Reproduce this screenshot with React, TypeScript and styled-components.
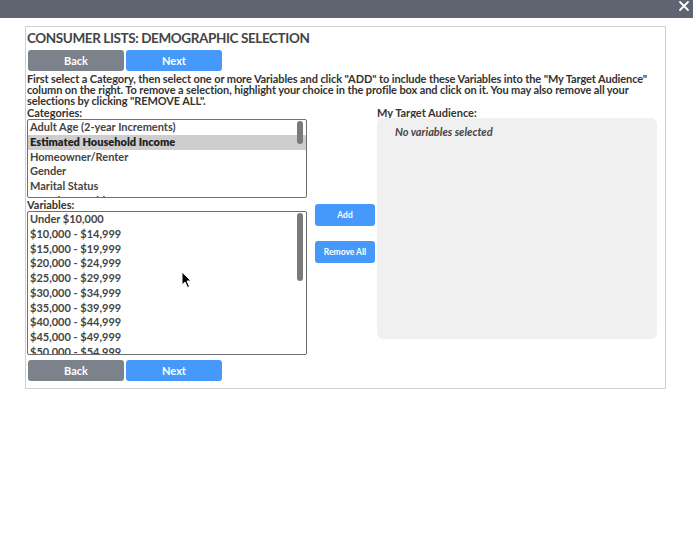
import React from 'react';
import styled, { createGlobalStyle } from 'styled-components';

const GlobalStyle = createGlobalStyle`
  html, body {
    margin: 0;
    padding: 0;
    background: #fff;
  }
  body {
    font-family: Lato, "Noto Sans", sans-serif;
    color: #333;
  }
`;

const Page = styled.div`
  width: 693px;
  height: 542px;
  position: relative;
  overflow: hidden;
  background: #fff;
`;

const TopBar = styled.div`
  height: 18px;
  background: #5e6470;
  display: flex;
  justify-content: flex-end;
  align-items: center;
  padding-right: 3px;
`;

const CloseIcon = styled.svg`
  width: 12px;
  height: 12px;
  margin-top: -7px;
`;

const Panel = styled.div`
  margin: 8px 0 0 25px;
  width: 637px;
  height: 361px;
  border: 1px solid #cfcfcf;
  padding: 0 1px;
  box-sizing: content-box;
`;

const Title = styled.h1`
  margin: 3px 0 0;
  font-size: 13.5px;
  line-height: 16px;
  letter-spacing: -0.4px;
  font-weight: 700;
  color: #444;
`;

const ButtonRow = styled.div<{ $top: number }>`
  display: flex;
  gap: 2px;
  margin: ${(p) => p.$top}px 0 0 1px;
`;

const NavButton = styled.button<{ $variant: 'back' | 'next' }>`
  width: 96px;
  height: 21px;
  border: none;
  border-radius: 3px;
  background: ${(p) => (p.$variant === 'back' ? '#7b828b' : '#4499fb')};
  color: #fff;
  font-family: inherit;
  font-size: 11px;
  font-weight: 700;
  padding: 0;
  cursor: pointer;
`;

const Instructions = styled.p`
  margin: 2px 0 0;
  font-size: 11px;
  line-height: 11px;
  letter-spacing: -0.1px;
  font-weight: 700;
  color: #333;
`;

const Columns = styled.div`
  display: grid;
  grid-template-columns: 280px 60px 280px;
  column-gap: 8px;
`;

const LeftCol = styled.div`
  display: flex;
  flex-direction: column;
`;

const MiddleCol = styled.div`
  display: flex;
  flex-direction: column;
  gap: 15px;
  padding-top: 98px;
`;

const RightCol = styled.div`
  width: 280px;
  margin-left: -6px;
  display: flex;
  flex-direction: column;
`;

const Label = styled.div`
  font-size: 11px;
  line-height: 13px;
  font-weight: 700;
  color: #333;
`;

const ListFrame = styled.div<{ $height: number }>`
  position: relative;
  height: ${(p) => p.$height}px;
  border: 1px solid #6e6e6e;
  border-radius: 2px;
  overflow: hidden;
  box-sizing: border-box;
`;

const ListScroll = styled.div`
  height: 100%;
  overflow: hidden;
`;

const Thumb = styled.div<{ $height: number }>`
  position: absolute;
  top: 1px;
  right: 3px;
  width: 6px;
  height: ${(p) => p.$height}px;
  border-radius: 3px;
  background: #7a7a7a;
`;

const Option = styled.div<{ $selected?: boolean }>`
  font-size: 11px;
  line-height: 14.75px;
  padding-left: 2px;
  font-weight: ${(p) => (p.$selected ? 800 : 700)};
  color: ${(p) => (p.$selected ? '#222' : '#444')};
  background: ${(p) => (p.$selected ? '#cecece' : 'transparent')};
  white-space: nowrap;
`;

const SideButton = styled.button`
  width: 60px;
  height: 22px;
  border: none;
  border-radius: 3px;
  background: #4499fb;
  color: #fff;
  font-family: inherit;
  font-size: 8.5px;
  font-weight: 700;
  padding: 0;
`;

const TargetBox = styled.div`
  height: 221px;
  margin-top: -1px;
  background: #f0f0f0;
  border-radius: 6px;
  padding: 7px 18px;
  box-sizing: border-box;
`;

const EmptyNote = styled.div`
  font-size: 11px;
  font-style: italic;
  font-weight: 700;
  color: #444;
`;

const Cursor = styled.svg`
  position: absolute;
  left: 181px;
  top: 271px;
  width: 12px;
  height: 18px;
`;

const categories = [
  'Adult Age (2-year Increments)',
  'Estimated Household Income',
  'Homeowner/Renter',
  'Gender',
  'Marital Status',
  'Length of Residence',
];

const incomes = [
  'Under $10,000',
  '$10,000 - $14,999',
  '$15,000 - $19,999',
  '$20,000 - $24,999',
  '$25,000 - $29,999',
  '$30,000 - $34,999',
  '$35,000 - $39,999',
  '$40,000 - $44,999',
  '$45,000 - $49,999',
  '$50,000 - $54,999',
];

export default function App() {
  return (
    <Page>
      <GlobalStyle />
      <TopBar>
        <CloseIcon viewBox="0 0 12 12">
          <path d="M2 2 L10 10 M10 2 L2 10" stroke="#fff" strokeWidth="1.8" strokeLinecap="round" />
        </CloseIcon>
      </TopBar>
      <Panel>
        <Title>CONSUMER LISTS: DEMOGRAPHIC SELECTION</Title>
        <ButtonRow $top={4}>
          <NavButton $variant="back">Back</NavButton>
          <NavButton $variant="next">Next</NavButton>
        </ButtonRow>
        <Instructions>
          First select a Category, then select one or more Variables and click "ADD" to include these Variables into the "My Target Audience" column on the right. To remove a selection, highlight your choice in the profile box and click on it. You may also remove all your selections by clicking "REMOVE ALL".
        </Instructions>
        <Columns>
          <LeftCol>
            <Label>Categories:</Label>
            <ListFrame $height={79}>
              <ListScroll>
                {categories.map((c, i) => (
                  <Option key={c} $selected={i === 1}>{c}</Option>
                ))}
              </ListScroll>
              <Thumb $height={23} />
            </ListFrame>
            <Label>Variables:</Label>
            <ListFrame $height={144}>
              <ListScroll>
                {incomes.map((v) => (
                  <Option key={v}>{v}</Option>
                ))}
              </ListScroll>
              <Thumb $height={68} />
            </ListFrame>
            <ButtonRow $top={5}>
              <NavButton $variant="back">Back</NavButton>
              <NavButton $variant="next">Next</NavButton>
            </ButtonRow>
          </LeftCol>
          <MiddleCol>
            <SideButton>Add</SideButton>
            <SideButton>Remove All</SideButton>
          </MiddleCol>
          <RightCol>
            <Label>My Target Audience:</Label>
            <TargetBox>
              <EmptyNote>No variables selected</EmptyNote>
            </TargetBox>
          </RightCol>
        </Columns>
      </Panel>
      <Cursor viewBox="0 0 12 18">
        <path d="M1 1 L1 14 L4 11 L6.5 16.5 L8.5 15.5 L6 10 L10 10 Z" fill="#000" stroke="#fff" strokeWidth="1" />
      </Cursor>
    </Page>
  );
}
